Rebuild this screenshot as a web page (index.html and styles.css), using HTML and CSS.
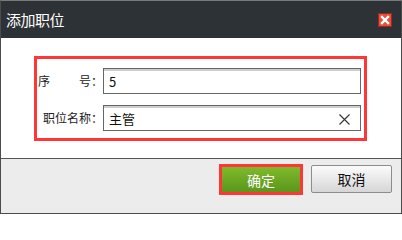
FILE: index.html
```html
<!DOCTYPE html>
<html lang="zh">
<head>
<meta charset="utf-8">
<title>添加职位</title>
<link rel="stylesheet" href="styles.css">
</head>
<body>
<div class="dialog">
  <div class="header">
    <span class="title">添加职位</span>
    <span class="close" aria-label="关闭">
      <svg width="14" height="14" viewBox="0 0 14 14">
        <rect x="0.5" y="0.5" width="13" height="13" fill="#e2513c" stroke="#a8231a"/>
        <path d="M4 4 L10 10 M10 4 L4 10" stroke="#fff" stroke-width="2.4" stroke-linecap="square"/>
      </svg>
    </span>
  </div>
  <div class="body">
    <div class="form">
      <div class="row">
        <label class="label">序<span class="gap"></span>号：</label>
        <div class="input"><span class="value">5</span></div>
      </div>
      <div class="row">
        <label class="label">职位名称：</label>
        <div class="input">
          <span class="value">主管</span>
          <svg class="clear" width="11" height="11" viewBox="0 0 11 11">
            <path d="M0.5 0.5 L10.5 10.5 M10.5 0.5 L0.5 10.5" stroke="#333" stroke-width="1.1"/>
          </svg>
        </div>
      </div>
    </div>
  </div>
  <div class="footer">
    <button class="btn btn-ok">确定</button>
    <button class="btn btn-cancel">取消</button>
  </div>
</div>
</body>
</html>
```
FILE: styles.css
```css
* { box-sizing: border-box; }
html, body { margin: 0; padding: 0; background: #fff; }
body {
  font-family: "Noto Sans CJK SC", "Noto Sans", sans-serif;
}
.dialog {
  width: 402px;
  height: 214px;
  border: 1px solid #4c4c4c;
  border-top-color: #7a7a7a;
  display: flex;
  flex-direction: column;
}
.header {
  height: 37px;
  background: #2d3236;
  display: flex;
  align-items: center;
  justify-content: space-between;
  padding: 0 9px 0 5px;
  flex: none;
}
.title {
  color: #fff;
  font-size: 15px;
  line-height: 18px;
  letter-spacing: -0.5px;
}
.close { display: flex; }
.body {
  height: 120px;
  background: #fff;
  padding: 18px 0 0 33px;
  flex: none;
}
.form {
  width: 333px;
  height: 85px;
  border: 3px solid #ff3636;
  padding: 9px 3px 0 1px;
  display: flex;
  flex-direction: column;
  gap: 11px;
}
.row {
  display: flex;
  align-items: center;
}
.label {
  width: 65px;
  text-align: right;
  font-size: 12px;
  color: #222;
  white-space: nowrap;
  line-height: 16px;
}
.gap {
  display: inline-block;
  width: 29px;
}
.input {
  width: 258px;
  height: 26px;
  border: 1px solid #666;
  box-shadow: inset 0 2px 0 #cfcfcf;
  display: flex;
  align-items: center;
  justify-content: space-between;
  padding: 2px 10px 0 5px;
  font-size: 13px;
  color: #111;
}
.value { line-height: 16px; }
.clear { flex: none; }
.footer {
  flex: 1;
  background: #ececec;
  border-top: 1px solid #555;
  display: flex;
  justify-content: flex-end;
  align-items: flex-start;
  gap: 8px;
  padding: 5px 9px 0 0;
}
.btn {
  font-family: "Noto Sans CJK SC", "Noto Sans", sans-serif;
  font-size: 14px;
  margin: 0;
  padding: 0;
  cursor: pointer;
}
.btn-ok {
  width: 84px;
  height: 31px;
  border: 3px solid #ff3636;
  background: linear-gradient(#7fba2c, #5a961c);
  color: #fff;
}
.btn-cancel {
  width: 81px;
  height: 28px;
  margin-top: 1px;
  border: 1px solid #8c8c8c;
  border-radius: 2px;
  background: linear-gradient(#fbfbfb, #d6d6d6);
  color: #111;
}
```
